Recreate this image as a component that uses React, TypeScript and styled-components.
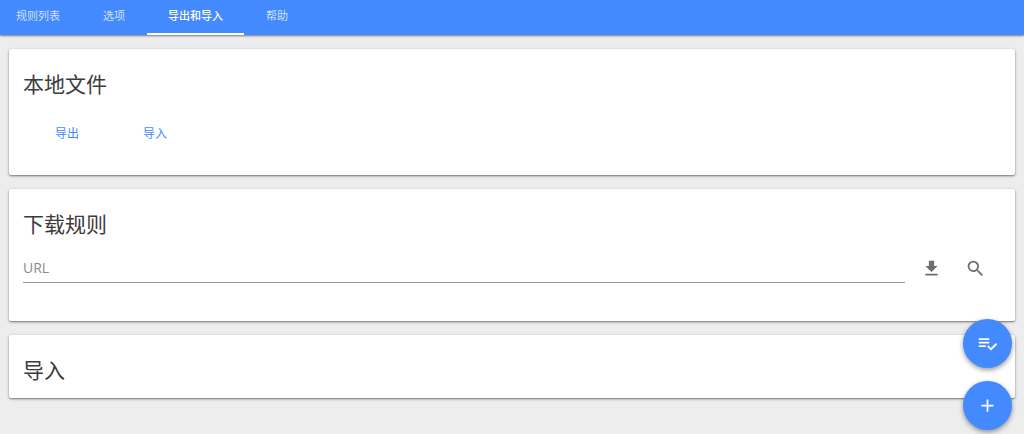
import React, { useState } from 'react';
import styled, { createGlobalStyle } from 'styled-components';
import { MdFileDownload, MdSearch, MdAdd } from 'react-icons/md';

const GlobalStyle = createGlobalStyle`
  *, *::before, *::after {
    box-sizing: border-box;
  }
  html {
    background: #ededed;
  }
  body {
    margin: 0;
    font-family: "Open Sans", "Noto Sans CJK SC", sans-serif;
    color: #3c3c3c;
  }
`;

const Header = styled.header`
  display: flex;
  height: 35px;
  background: #448aff;
  box-shadow: 0 1px 2px rgba(0, 0, 0, 0.5);
`;

const TabBar = styled.nav`
  display: flex;
  gap: 1px;
`;

const Tab = styled.button<{ $active: boolean }>`
  padding: 0 21px 3px;
  border: 0;
  border-bottom: 2px solid ${({ $active }) => ($active ? '#fff' : 'transparent')};
  background: none;
  color: ${({ $active }) => ($active ? '#fff' : 'rgba(255, 255, 255, 0.75)')};
  font: ${({ $active }) => ($active ? 500 : 400)} 11px/16px "Noto Sans CJK SC", sans-serif;
  white-space: nowrap;
  cursor: pointer;

  &:first-child {
    padding-left: 16px;
  }
`;

const Page = styled.main`
  display: flex;
  flex-direction: column;
  gap: 14px;
  padding: 14px 9px 36px;
`;

const Card = styled.section`
  padding: 18px 14px 13px;
  border-radius: 2px;
  background: #fff;
  box-shadow: 0 1px 2px rgba(0, 0, 0, 0.45), 0 1px 4px rgba(0, 0, 0, 0.12);
`;

const CardTitle = styled.h2`
  margin: 0;
  font: 400 21px/32px "Noto Sans CJK SC", sans-serif;
`;

const Actions = styled.div`
  display: flex;
  margin-top: 16px;
  padding-bottom: 11px;
`;

const TextButton = styled.button`
  min-width: 88px;
  height: 36px;
  padding: 0 14px;
  border: 0;
  background: none;
  color: #448aff;
  font: 400 12px/16px "Noto Sans CJK SC", sans-serif;
  cursor: pointer;
`;

const UrlRow = styled.div`
  display: flex;
  align-items: center;
  margin-top: 7px;
  padding: 0 4px 18px 0;
`;

const UrlInput = styled.input`
  flex: 1;
  min-width: 0;
  height: 30px;
  margin-right: 4px;
  padding: 0;
  border: 0;
  border-bottom: 1px solid #949494;
  background: none;
  color: #3c3c3c;
  font: 400 14px/20px "Open Sans", "Noto Sans CJK SC", sans-serif;
  outline: none;

  &::placeholder {
    color: #8a8a8a;
    opacity: 1;
  }
`;

const IconButton = styled.button`
  display: grid;
  place-items: center;
  width: 44px;
  height: 44px;
  padding: 0;
  border: 0;
  background: none;
  color: #6e6e6e;
  font-size: 21px;
  cursor: pointer;
`;

const FabStack = styled.div`
  position: fixed;
  right: 12px;
  bottom: 4px;
  display: flex;
  flex-direction: column;
  gap: 13px;
`;

const Fab = styled.button`
  display: grid;
  place-items: center;
  width: 49px;
  height: 49px;
  padding: 0;
  border: 0;
  border-radius: 50%;
  background: #448aff;
  color: #fff;
  font-size: 21px;
  box-shadow: 0 2px 5px rgba(0, 0, 0, 0.4);
  cursor: pointer;
`;

const ListCheckIcon = () => (
  <svg width="1em" height="1em" viewBox="0 0 24 24" fill="currentColor" aria-hidden="true">
    <path d="M14 10H2v2h12v-2zm0-4H2v2h12V6zM2 16h8v-2H2v2zm19.5-4.5L23 13l-6.99 7-4.51-4.5L13 14l3.01 3 5.49-5.5z" />
  </svg>
);

const tabs = ['规则列表', '选项', '导出和导入', '帮助'];

export default function App() {
  const [active, setActive] = useState(2);
  const [url, setUrl] = useState('');

  return (
    <>
      <GlobalStyle />
      <Header>
        <TabBar>
          {tabs.map((label, index) => (
            <Tab
              key={label}
              type="button"
              $active={index === active}
              aria-current={index === active ? 'page' : undefined}
              onClick={() => setActive(index)}
            >
              {label}
            </Tab>
          ))}
        </TabBar>
      </Header>
      <Page>
        <Card>
          <CardTitle>本地文件</CardTitle>
          <Actions>
            <TextButton type="button">导出</TextButton>
            <TextButton type="button">导入</TextButton>
          </Actions>
        </Card>
        <Card>
          <CardTitle>下载规则</CardTitle>
          <UrlRow>
            <UrlInput
              type="url"
              aria-label="URL"
              placeholder="URL"
              value={url}
              onChange={(event) => setUrl(event.target.value)}
            />
            <IconButton type="button" aria-label="下载">
              <MdFileDownload />
            </IconButton>
            <IconButton type="button" aria-label="搜索">
              <MdSearch />
            </IconButton>
          </UrlRow>
        </Card>
        <Card>
          <CardTitle>导入</CardTitle>
        </Card>
      </Page>
      <FabStack>
        <Fab type="button" aria-label="批量选择">
          <ListCheckIcon />
        </Fab>
        <Fab type="button" aria-label="添加">
          <MdAdd />
        </Fab>
      </FabStack>
    </>
  );
}
